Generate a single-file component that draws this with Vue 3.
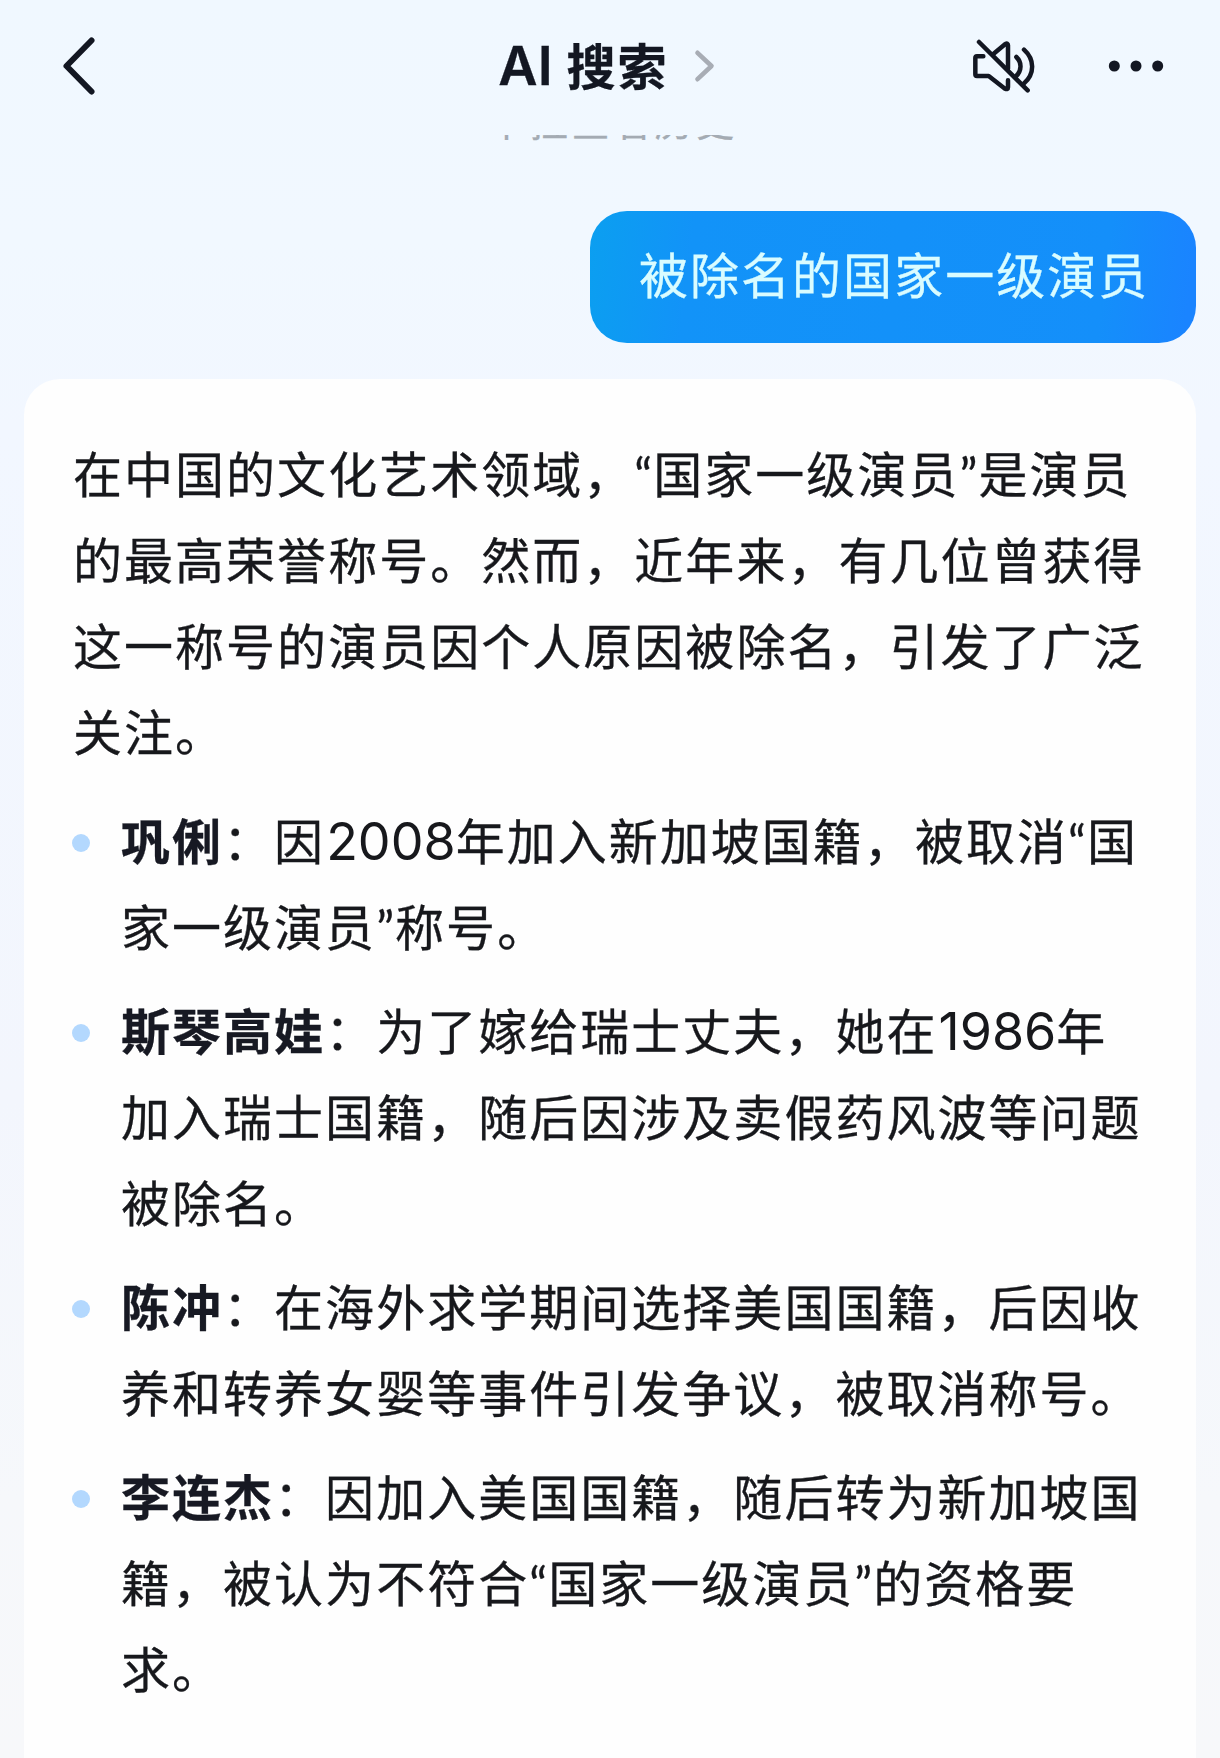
<script setup>
const intro = [
  ['在中国的文化艺术领域，', { q: '“' }, '国家一级演员', { q: '”' }, '是演员'],
  ['的最高荣誉称号。然而，近年来，有几位曾获得'],
  ['这一称号的演员因个人原因被除名，引发了广泛'],
  ['关注。'],
]

const people = [
  {
    name: '巩俐',
    lines: [
      ['：因', { n: '2008' }, '年加入新加坡国籍，被取消', { q: '“' }, '国'],
      ['家一级演员', { q: '”' }, '称号。'],
    ],
  },
  {
    name: '斯琴高娃',
    lines: [
      ['：为了嫁给瑞士丈夫，她在', { n: '1986' }, '年'],
      ['加入瑞士国籍，随后因涉及卖假药风波等问题'],
      ['被除名。'],
    ],
  },
  {
    name: '陈冲',
    lines: [
      ['：在海外求学期间选择美国国籍，后因收'],
      ['养和转养女婴等事件引发争议，被取消称号。'],
    ],
  },
  {
    name: '李连杰',
    lines: [
      ['：因加入美国国籍，随后转为新加坡国'],
      ['籍，被认为不符合', { q: '“' }, '国家一级演员', { q: '”' }, '的资格要'],
      ['求。'],
    ],
  },
]

const textOf = (part) => part.q || part.n || part
const classOf = (part) => ({ quote: part.q, num: part.n })
</script>

<template>
  <div class="screen">
    <header class="bar">
      <svg class="back" width="36" height="64" viewBox="0 0 36 64" aria-label="返回">
        <path d="M31.5 6.5 6.5 32l25 25.5" />
      </svg>
      <div class="title">
        <span class="latin">AI</span><span class="cjk">搜索</span>
        <svg class="more-arrow" width="22" height="36" viewBox="0 0 22 36">
          <path d="M3.5 4.8 17.5 18l-14 13.2" />
        </svg>
      </div>
      <div class="actions">
        <svg class="mute" width="66" height="58" viewBox="92 50 198 174">
          <path d="M119 65 265 210" />
          <path d="M132 108H113q-5 0-5 5v49q0 5 5 5h35l49 38q9 4 9-4v-21" />
          <path d="M162 101l36-30q8-4 8 4v70" />
          <path d="M231 110c17 16 17 41-2 59M254 88c32 29 33 72 0 101" />
        </svg>
        <svg class="dots" width="56" height="14" viewBox="0 0 56 14">
          <circle cx="6.3" cy="7" r="5.5" />
          <circle cx="28" cy="7" r="5.5" />
          <circle cx="49.7" cy="7" r="5.5" />
        </svg>
      </div>
    </header>

    <div class="history"><span>下拉查看历史</span></div>

    <div class="question">被除名的国家一级演员</div>

    <main class="answer">
      <p class="intro">
        <span v-for="(line, i) in intro" :key="i" class="line">
          <span v-for="(part, j) in line" :key="j" :class="classOf(part)">{{ textOf(part) }}</span>
        </span>
      </p>
      <ul class="people">
        <li v-for="person in people" :key="person.name">
          <i class="bullet"></i>
          <div>
            <span v-for="(line, i) in person.lines" :key="i" class="line">
              <b v-if="i === 0">{{ person.name }}</b>
              <span v-for="(part, j) in line" :key="j" :class="classOf(part)">{{ textOf(part) }}</span>
            </span>
          </div>
        </li>
      </ul>
    </main>
  </div>
</template>

<style>
body {
  margin: 0;
}
</style>

<style scoped>
.screen {
  display: flex;
  flex-direction: column;
  box-sizing: border-box;
  width: 1220px;
  height: 1758px;
  overflow: hidden;
  background: linear-gradient(180deg, #f0f8ff 0, #f1f8ff 240px, #f2f7ff 430px, #f3f6fd 1100px, #f6f8fb 1500px, #f7f8fa 100%);
  color: #17181c;
  font-family: "Noto Sans CJK SC", sans-serif;
  font-size: 49px;
  letter-spacing: 2.03px;
  -webkit-text-stroke: 0.3px currentColor;
}

.bar {
  display: grid;
  flex: none;
  grid-template-columns: 1fr auto 1fr;
  align-items: center;
  height: 132px;
  padding: 0 56px 0 60px;
}

svg {
  display: block;
  overflow: visible;
  fill: none;
  stroke: #131722;
  stroke-linecap: round;
  stroke-linejoin: round;
}

.back {
  stroke-width: 6;
}

.title {
  display: flex;
  align-items: center;
  padding-right: 10px;
  color: #131722;
  font-weight: 700;
  line-height: 72px;
}

.cjk {
  margin-top: -5px;
}

.latin {
  margin-right: 14px;
  font-family: Inter, sans-serif;
  font-size: 54px;
  font-weight: 600;
  letter-spacing: 0;
}

.more-arrow {
  margin-left: 25px;
  stroke: #a8adb5;
  stroke-width: 4.6;
}

.actions {
  display: flex;
  align-items: center;
  justify-content: flex-end;
  gap: 72px;
}

.mute {
  stroke-width: 13.5;
}

.dots {
  fill: #131722;
  stroke: none;
}

.history {
  display: flex;
  flex: none;
  align-items: flex-end;
  justify-content: center;
  height: 6px;
  margin: 3px 0 1px;
  padding-left: 6px;
  overflow: hidden;
  color: #a4abb3;
  font-size: 38px;
  letter-spacing: 3.6px;
  line-height: 42px;
}

.question {
  display: flex;
  flex: none;
  align-items: center;
  align-self: flex-end;
  box-sizing: border-box;
  width: 606px;
  height: 132px;
  margin: 69px 24px 0 0;
  padding: 0 0 10px 49px;
  border-radius: 37px;
  background: linear-gradient(97deg, #0b9ff0 0, #1293f8 17%, #148ffa 84%, #1a84ff 98%);
  color: #d9fcff;
  white-space: nowrap;
}

.answer {
  flex: 1;
  margin: 36px 24px 0;
  padding: 50px 0 0 49px;
  border-radius: 36px 36px 0 0;
  background: #fefefe;
}

.intro {
  margin: 0 0 23px;
}

.line {
  display: flex;
  align-items: baseline;
  height: 86.1px;
  line-height: 86.1px;
  white-space: nowrap;
}

.people {
  display: flex;
  flex-direction: column;
  gap: 17.6px;
  margin: 0 0 0 -1px;
  padding: 0;
  list-style: none;
}

.people li {
  display: flex;
}

.bullet {
  flex: none;
  width: 18px;
  height: 18px;
  margin: 38px 31px 0 0;
  border-radius: 50%;
  background: #b3d8fe;
}

b {
  color: #171923;
  font-weight: 700;
}

.quote {
  font-family: Lato, sans-serif;
  letter-spacing: 1px;
}

.num {
  padding-left: 1px;
  font-family: Inter, sans-serif;
  font-size: 52px;
  letter-spacing: 0;
  -webkit-text-stroke: 0;
}
</style>
